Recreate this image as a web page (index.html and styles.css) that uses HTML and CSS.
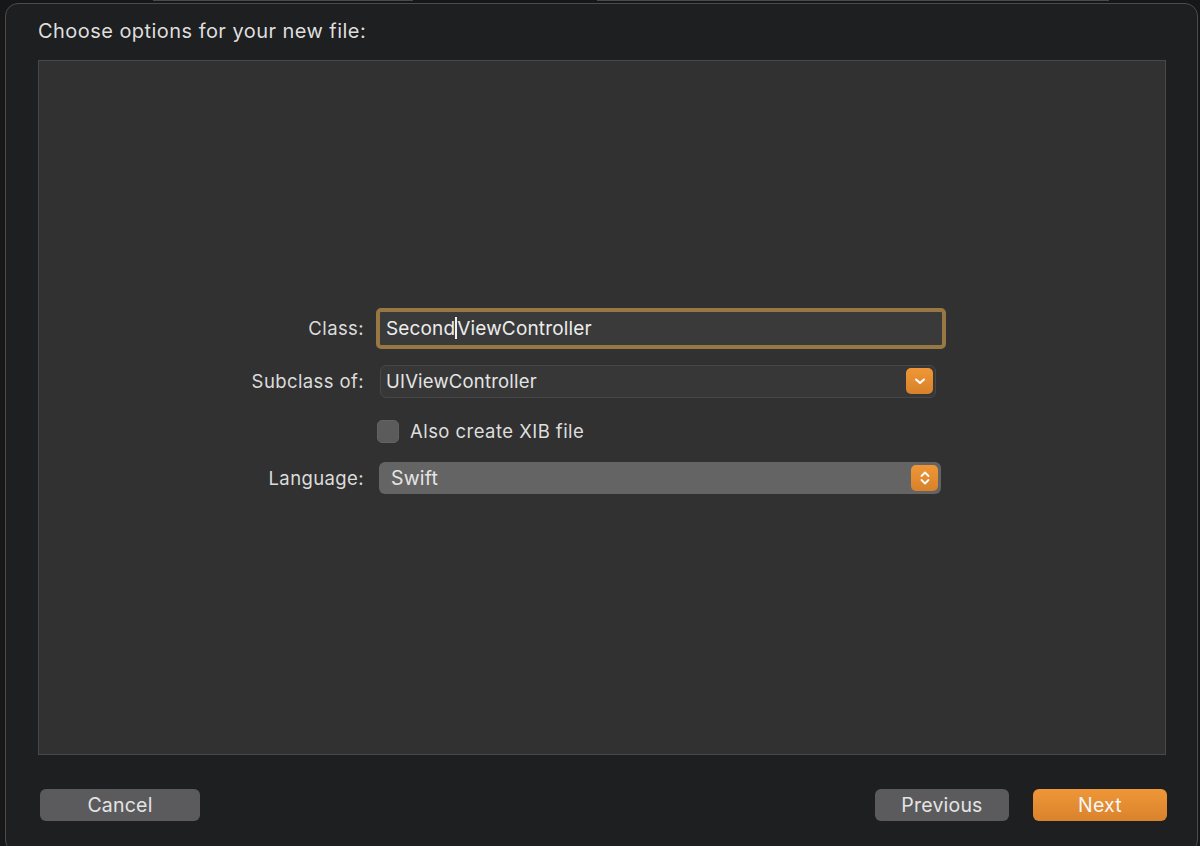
FILE: index.html
```html
<!DOCTYPE html>
<html lang="en">

<head>
    <meta charset="UTF-8">
    <title>New File</title>
    <link rel="stylesheet" href="styles.css">
</head>

<body>

    <div class="backdrop">
        <span class="tab tab-a"></span>
        <span class="tab tab-b"></span>
    </div>

    <div class="sheet">

        <h1 class="sheet-title">Choose options for your new file:</h1>

        <div class="panel">
            <div class="form">

                <div class="row">
                    <label class="row-label" for="className">Class:</label>
                    <div class="text-field">
                        <span class="typed">Second</span><span class="caret"></span><span class="typed">ViewController</span>
                    </div>
                </div>

                <div class="row row-subclass">
                    <span class="row-label">Subclass of:</span>
                    <div class="popup popup-combo">
                        <span class="popup-value">UIViewController</span>
                        <span class="popup-btn">
                            <svg width="14" height="10" viewBox="0 0 14 10">
                                <path d="M3 3.5 L7 7 L11 3.5" fill="none" stroke="#fff" stroke-width="2" stroke-linecap="round" stroke-linejoin="round" />
                            </svg>
                        </span>
                    </div>
                </div>

                <div class="row row-check">
                    <span class="row-label"></span>
                    <label class="check">
                        <span class="check-box"></span>
                        <span class="check-text">Also create XIB file</span>
                    </label>
                </div>

                <div class="row row-lang">
                    <span class="row-label">Language:</span>
                    <div class="popup popup-select">
                        <span class="popup-value">Swift</span>
                        <span class="popup-btn">
                            <svg width="14" height="20" viewBox="0 0 14 20">
                                <path d="M3.5 8 L7 4.5 L10.5 8" fill="none" stroke="#fff" stroke-width="1.8" stroke-linecap="round" stroke-linejoin="round" />
                                <path d="M3.5 12 L7 15.5 L10.5 12" fill="none" stroke="#fff" stroke-width="1.8" stroke-linecap="round" stroke-linejoin="round" />
                            </svg>
                        </span>
                    </div>
                </div>

            </div>
        </div>

        <div class="footer">
            <button class="btn">Cancel</button>
            <div class="footer-right">
                <button class="btn">Previous</button>
                <button class="btn btn-primary">Next</button>
            </div>
        </div>

    </div>

</body>

</html>
```

FILE: styles.css
```css
* {
    margin: 0;
    padding: 0;
    box-sizing: border-box;
}

body {
    background-color: #171717;
    font-family: Inter, "Noto Sans", sans-serif;
    color: #dcdcdc;
    height: 846px;
    overflow: hidden;
}

/* windows peeking out behind the sheet */
.backdrop {
    display: flex;
    height: 2px;
}

.tab {
    height: 1px;
    background-color: #4a4a4a;
}

.tab-a {
    width: 260px;
    margin-left: 153px;
}

.tab-b {
    width: 512px;
    margin-left: 184px;
}

.sheet {
    margin: 1px 2px 0 5px;
    height: 850px;
    background-color: #1e1f21;
    border: 1px solid #4b4b4d;
    border-radius: 13px;
    padding: 0 31px 0 32px;
    display: flex;
    flex-direction: column;
}

.sheet-title {
    font-size: 20px;
    font-weight: 400;
    color: #dedede;
    padding-top: 15px;
    height: 56px;
    letter-spacing: 0.45px;
}

.panel {
    height: 695px;
    background-color: #313131;
    border: 1px solid #484848;
    display: flex;
    align-items: center;
    padding-bottom: 14px;
}

.form {
    display: flex;
    flex-direction: column;
    width: 100%;
}

.row {
    display: flex;
    align-items: center;
}

.row-label {
    width: 325px;
    text-align: right;
    font-size: 18.5px;
    letter-spacing: 0.4px;
    color: #dcdcdc;
    flex-shrink: 0;
}

.text-field {
    margin-left: 12px;
    width: 570px;
    height: 41px;
    border: 4px solid #977842;
    border-radius: 5px;
    background-color: #3a3a3a;
    display: flex;
    align-items: center;
    padding-left: 6px;
    font-size: 19px;
    letter-spacing: 0.15px;
    color: #ececec;
}

.caret {
    width: 2px;
    height: 22px;
    background-color: #f2f2f2;
}

.popup {
    display: flex;
    align-items: center;
    justify-content: space-between;
    border-radius: 6px;
    font-size: 18.5px;
    letter-spacing: 0.2px;
    color: #e4e4e4;
}

.popup-btn {
    width: 27px;
    height: 26px;
    border-radius: 5px;
    background: linear-gradient(#ef9736, #d7812b);
    display: flex;
    align-items: center;
    justify-content: center;
}

.row-subclass {
    margin-top: 16px;
}

.popup-combo {
    margin-left: 16px;
    width: 556px;
    height: 33px;
    background-color: #373737;
    border: 1px solid #474747;
    padding: 0 2px 0 5px;
}

.row-check {
    margin-top: 22px;
}

.check {
    margin-left: 13px;
    display: flex;
    align-items: center;
}

.check-box {
    width: 22px;
    height: 23px;
    border-radius: 5px;
    background-color: #5b5b5b;
    border: 1px solid #626262;
}

.check-text {
    margin-left: 11px;
    font-size: 18.5px;
    letter-spacing: 0.45px;
    color: #dedede;
}

.row-lang {
    margin-top: 19px;
}

.popup-select {
    margin-left: 15px;
    width: 562px;
    height: 32px;
    background-color: #646464;
    padding: 0 3px 0 12px;
    font-size: 19.5px;
}

.footer {
    display: flex;
    justify-content: space-between;
    align-items: center;
    padding: 34px 0 0 2px;
}

.footer-right {
    display: flex;
    gap: 24px;
    margin-right: -1px;
}

.btn {
    width: 160px;
    height: 32px;
    border: none;
    border-radius: 6px;
    background-color: #5b5b5d;
    color: #e4e4e4;
    font-family: Inter, "Noto Sans", sans-serif;
    font-size: 19.5px;
    letter-spacing: 0.2px;
    cursor: pointer;
}

.footer-right .btn {
    width: 134px;
}

.btn-primary {
    background: linear-gradient(#ef9638, #d9832c);
    color: #f6f6f6;
}
```
